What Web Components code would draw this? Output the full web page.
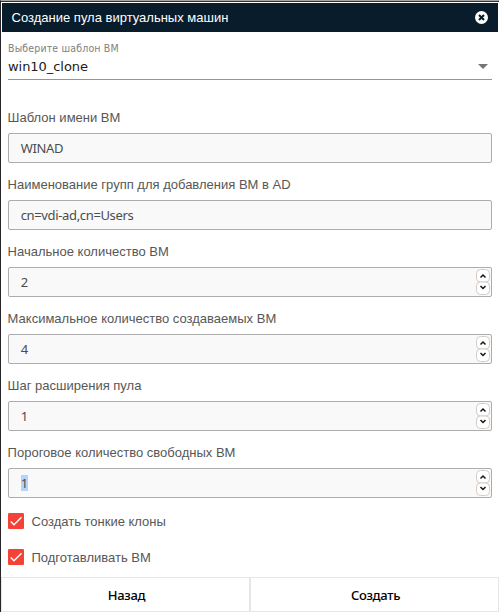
<!DOCTYPE html>
<html lang="ru"><head><meta charset="utf-8"><title>Создание пула виртуальных машин</title>
<style>
html,body{margin:0;height:612px;overflow:hidden;background:#fff}
body{font-family:"Liberation Sans",Arial,sans-serif;font-size:13px;color:#575757}
</style></head><body>
<pool-dialog heading="Создание пула виртуальных машин">
  <template-select label="Выберите шаблон ВМ" value="win10_clone"></template-select>
  <form-field label="Шаблон имени ВМ">WINAD</form-field>
  <form-field label="Наименование групп для добавления ВМ в AD">cn=vdi-ad,cn=Users</form-field>
  <form-field label="Начальное количество ВМ" number>2</form-field>
  <form-field label="Максимальное количество создаваемых ВМ" number>4</form-field>
  <form-field label="Шаг расширения пула" number>1</form-field>
  <form-field label="Пороговое количество свободных ВМ" number selected>1</form-field>
  <check-option>Создать тонкие клоны</check-option>
  <check-option>Подготавливать ВМ</check-option>
  <dialog-button slot="actions">Назад</dialog-button>
  <dialog-button slot="actions">Создать</dialog-button>
</pool-dialog>
<script>
class PoolDialog extends HTMLElement{
  constructor(){super();this.attachShadow({mode:'open'}).innerHTML=`
  <style>
  :host{display:flex;flex-direction:column;box-sizing:border-box;width:499px;height:612px;border-top:1px solid #a5a5a5;border-left:1px solid #272528;background:#fff}
  .edge{height:1px;flex:none;background:#333;margin-bottom:1px}
  header{box-sizing:border-box;height:29px;flex:none;margin:0 1px;padding:0 10px 0 9.6px;display:flex;align-items:center;justify-content:space-between;background:#081c2c;color:#fff}
  header svg{display:block}
  main{padding:0 7px;flex:1;min-height:0}
  ::slotted(form-field:last-of-type){height:60px}
  footer{flex:none;display:grid;grid-template-columns:1fr 1fr;gap:2px;background:#e6e6e6;border:1px solid #e6e6e6;height:33px}
  </style>
  <div class="edge"></div>
  <header><span></span><svg width="13" height="13" viewBox="0 0 13 13"><circle cx="6.5" cy="6.5" r="6.5" fill="#fff"/><path d="M4 4l5 5M9 4L4 9" stroke="#081c2c" stroke-width="2.1"/></svg></header>
  <main><slot></slot></main><footer><slot name="actions"></slot></footer>`;}
  connectedCallback(){this.shadowRoot.querySelector('span').textContent=this.getAttribute('heading')}
}
class TemplateSelect extends HTMLElement{
  constructor(){super();this.attachShadow({mode:'open'}).innerHTML=`
  <style>
  :host{display:block;box-sizing:border-box;height:76px;padding-top:9px}
  .label{font:10.5px/14px "DejaVu Sans Condensed","DejaVu Sans",sans-serif;font-stretch:condensed;letter-spacing:.16px;color:#818181}
  .row{box-sizing:border-box;height:25px;display:flex;justify-content:space-between;align-items:center;padding:0 4px 1px 0;border-bottom:1px solid #949494;font:13px/20px "DejaVu Sans",sans-serif;letter-spacing:-.05px;color:#212121}
  i{border:5px solid transparent;border-top-color:#757575;border-bottom:0}
  </style><div class="label"></div><div class="row"><span></span><i></i></div>`;}
  connectedCallback(){this.shadowRoot.querySelector('.label').textContent=this.getAttribute('label');
  this.shadowRoot.querySelector('span').textContent=this.getAttribute('value')}
}
class FormField extends HTMLElement{
  constructor(){super();this.attachShadow({mode:'open'}).innerHTML=`
  <style>
  :host{display:block;height:67px}
  .label{height:25px;line-height:20px;white-space:nowrap;margin-left:-.4px}
  .box{box-sizing:border-box;height:30px;border:1px solid #adadad;border-radius:2px;background:#f9f9f9;display:flex;align-items:center;justify-content:space-between;padding:0 1px 0 11.7px;font:13px/16px "Noto Sans",sans-serif;color:#4c4c4c}
  .value{letter-spacing:-.35px}
  :host([number]) .value{letter-spacing:0}
  :host([selected]) .value{background:#b3d4fc}
  svg{display:none}
  :host([number]) svg{display:block}
  </style><div class="label"></div><div class="box"><span class="value"><slot></slot></span>
  <svg width="14" height="26" viewBox="0 0 14 26" fill="none"><g fill="#fff" stroke="#d5ccc6"><rect x=".5" y=".5" width="13" height="12.5" rx="4"/><rect x=".5" y="13" width="13" height="12.5" rx="4"/></g><path d="M4.5 8.5L7 6l2.5 2.5M4.5 17L7 19.5 9.5 17" stroke="#161616" stroke-width="1.5"/></svg></div>`;}
  connectedCallback(){this.shadowRoot.querySelector('.label').textContent=this.getAttribute('label')}
}
class CheckOption extends HTMLElement{
  constructor(){super();this.attachShadow({mode:'open'}).innerHTML=`
  <style>
  :host{display:flex;align-items:center;gap:7.5px;height:36px}
  svg{flex:none}
  </style><svg width="16" height="16" viewBox="0 0 24 24"><rect width="24" height="24" rx="2" fill="#f44336"/><path d="M4.1 12.7L9 17.6 20.3 6.3" fill="none" stroke="#fff" stroke-width="2.13"/></svg><span><slot></slot></span>`;}
}
class DialogButton extends HTMLElement{
  constructor(){super();this.attachShadow({mode:'open'}).innerHTML=`
  <style>
  :host{display:flex;align-items:center;justify-content:center;background:#fff;color:#000;font:500 13px/18px "Noto Sans",sans-serif;letter-spacing:-.3px;padding-left:2px}
  </style><span><slot></slot></span>`;}
}
customElements.define('pool-dialog',PoolDialog);
customElements.define('template-select',TemplateSelect);
customElements.define('form-field',FormField);
customElements.define('check-option',CheckOption);
customElements.define('dialog-button',DialogButton);
</script>
</body></html>
